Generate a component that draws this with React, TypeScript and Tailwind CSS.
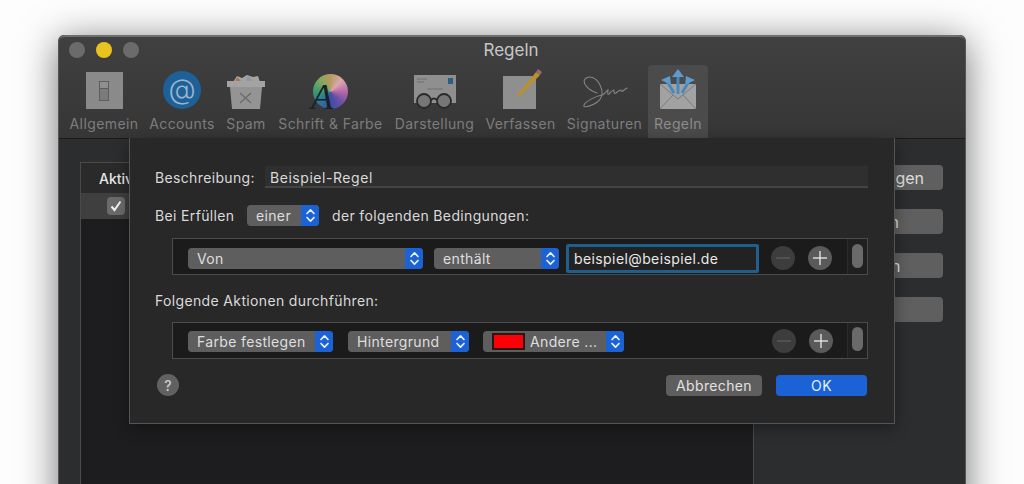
import type { ReactNode } from "react";

const font = { fontFamily: "Inter, 'Liberation Sans', sans-serif" };

function Chevrons() {
    return (
        <svg className="w-[9px] h-[15px]" viewBox="0 0 9 15" fill="none" stroke="#e8eefc" strokeWidth={1.7} strokeLinecap="round" strokeLinejoin="round">
            <path d="M1 5.5 L4.5 1.8 L8 5.5" />
            <path d="M1 9.5 L4.5 13.2 L8 9.5" />
        </svg>
    );
}

function Popup({ label, className, swatch }: { label: string; className: string; swatch?: boolean }) {
    return (
        <div className={`h-[21px] flex rounded-[4px] overflow-hidden bg-[#5e5e5e] shrink-0 ${className}`}>
            <div className="flex-1 flex items-center pl-[9px] text-[14px] text-[#dedede] tracking-[0.35px] whitespace-nowrap">
                {swatch && <span className="w-[33px] h-[17px] bg-[#fb0007] border-2 border-[#2b1414] mr-[5px] shrink-0" />}
                {label}
            </div>
            <div className="w-[18px] bg-[#1a62d6] flex items-center justify-center shrink-0">
                <Chevrons />
            </div>
        </div>
    );
}

function RoundButton({ minus }: { minus?: boolean }) {
    return (
        <div className={`w-[24px] h-[24px] rounded-full flex items-center justify-center shrink-0 ${minus ? "bg-[#3d3d3d]" : "bg-[#5a5a5a]"}`}>
            <svg className="w-[16px] h-[16px]" viewBox="0 0 16 16" stroke={minus ? "#5e5e5e" : "#ececec"} strokeWidth={1.3}>
                <path d="M1 8 H15" />
                {!minus && <path d="M8 1 V15" />}
            </svg>
        </div>
    );
}

function RuleBox({ children, rowClass, thumbClass, circlesClass }: { children: ReactNode; rowClass: string; thumbClass: string; circlesClass: string }) {
    return (
        <div className="ml-[17px] mr-[1px] h-[37px] flex items-stretch border border-[#4b4b4b] bg-[#1b1b1b]">
            <div className={`flex-1 flex items-center pl-[15px] min-w-0 ${rowClass}`}>
                {children}
                <div className={`ml-auto flex gap-[13px] ${circlesClass}`}>
                    <RoundButton minus />
                    <RoundButton />
                </div>
            </div>
            <div className="w-[20px] border-l border-[#2c2c2c] bg-[#202020] flex justify-center shrink-0">
                <div className={`w-[11px] h-[24px] rounded-full bg-[#6a6a6a] ${thumbClass}`} />
            </div>
        </div>
    );
}

function GeneralIcon() {
    return (
        <div className="w-[37px] h-[37px] bg-[#8a8a8a] flex items-center justify-center">
            <div className="w-[10px] h-[20px] border border-[#5d5d5d] bg-[#7b7b7b]">
                <div className="h-[7px] border-b border-[#5d5d5d] bg-[#8f8f8f]" />
            </div>
        </div>
    );
}

function AccountsIcon() {
    return (
        <div className="w-[38px] h-[38px] rounded-full bg-[#1e6098] flex items-center justify-center text-[28px] font-light leading-none text-[#9ab6cd] pb-[3px]">
            @
        </div>
    );
}

function SpamIcon() {
    return (
        <svg className="w-[38px] h-[34px]" viewBox="0 0 38 34">
            <path d="M6 7 L10 1 L15 3 L20 0 L26 2 L31 1 L33 7 Z" fill="#a9a39b" />
            <path d="M10 2 L15 7 H8 Z" fill="#a8794f" />
            <path d="M21 1 L27 7 H18 Z" fill="#8d97ad" />
            <path d="M0 6 H38 V12 H0 Z" fill="#a3a3a3" />
            <path d="M3 12 H35 L33 34 H5 Z" fill="#949494" />
            <path d="M13 18 L24 28 M24 18 L13 28" stroke="#6a6a6a" strokeWidth={1.3} />
        </svg>
    );
}

function FontIcon() {
    return (
        <div className="relative w-[35px] h-[35px] rounded-full bg-[conic-gradient(#b89a60,#d8a8b0,#b868a8,#6a50a8,#3a50a0,#2a78a0,#3a9a70,#80a860,#b89a60)]">
            <span className="absolute left-[-2px] top-[9px] text-[36px] leading-[28px] text-[#1c2028] italic" style={{ fontFamily: "'Liberation Serif', serif" }}>
                A
            </span>
        </div>
    );
}

function LookIcon() {
    return (
        <svg className="w-[44px] h-[34px]" viewBox="0 0 44 34">
            <rect x="1" y="0" width="42" height="28" fill="#8f8f8f" />
            <rect x="35" y="3" width="5" height="6" fill="#2c5f86" />
            <path d="M4 4 H14 M4 7 H11 M14 14 H30" stroke="#6f6f6f" strokeWidth={1} />
            <circle cx="11" cy="26" r="7" fill="#777" stroke="#2a2a2a" strokeWidth={1.8} />
            <circle cx="31" cy="26" r="7" fill="#777" stroke="#2a2a2a" strokeWidth={1.8} />
            <path d="M18 25 Q21 22 24 25" stroke="#2a2a2a" strokeWidth={1.8} fill="none" />
        </svg>
    );
}

function ComposeIcon() {
    return (
        <svg className="w-[44px] h-[42px]" viewBox="0 0 44 42">
            <rect x="4" y="9" width="33" height="33" fill="#8f8f8f" />
            <path d="M19 27 L37 5 L41 8 L21 29 L17 30 Z" fill="#b8902f" />
            <path d="M37 5 L39 2 L43 5 L41 8 Z" fill="#9a6a72" />
        </svg>
    );
}

function SignatureIcon() {
    return (
        <svg className="w-[46px] h-[33px]" viewBox="0 0 46 33" fill="none" stroke="#858585" strokeWidth={1.1} strokeLinecap="round">
            <path d="M15 17 C6 14 0 7 3 3 C7 -1 14 1 18 9 C22 17 20 24 12 28 C6 31 1 32 2 29 C4 25 14 20 20 19 C23 18 24 15 26 14 C26 17 25 19 27 18 C29 16 30 14 32 14 C32 17 32 18 34 17 C36 15 37 14 39 14 C39 16 40 16 42 14 L45 12" />
        </svg>
    );
}

function RulesIcon() {
    return (
        <svg className="w-[38px] h-[40px]" viewBox="0 0 38 40">
            <path d="M1 15 H37 V40 H1 Z" fill="#a2a2a2" />
            <path d="M1 15 L19 30 L37 15 M1 40 L14 26 M37 40 L24 26" stroke="#7a7a7a" strokeWidth={1} fill="none" />
            <path d="M19 25 V7 M15 24 L8 12 M23 24 L30 12" stroke="#4a88bc" strokeWidth={3} fill="none" />
            <path d="M13 8 L19 0 L25 8 Z M2 11 L11 7 L12 16 Z M36 11 L27 7 L26 16 Z" fill="#5b9bd0" />
        </svg>
    );
}

const tabs = [
    { label: "Allgemein", width: "w-[80px]", icon: <GeneralIcon /> },
    { label: "Accounts", width: "w-[76px]", icon: <AccountsIcon /> },
    { label: "Spam", width: "w-[52px]", icon: <SpamIcon /> },
    { label: "Schrift & Farbe", width: "w-[117px]", icon: <FontIcon /> },
    { label: "Darstellung", width: "w-[91px]", icon: <LookIcon /> },
    { label: "Verfassen", width: "w-[81px]", icon: <ComposeIcon /> },
    { label: "Signaturen", width: "w-[87px]", icon: <SignatureIcon /> },
    { label: "Regeln", width: "w-[60px]", icon: <RulesIcon />, active: true },
];

const sideButtons = ["Regel hinzufügen", "Bearbeiten", "Duplizieren", "Entfernen"];

export default function App() {
    return (
        <div className="w-[1024px] h-[484px] overflow-hidden bg-[#fdfdfd] pt-[35px] pl-[58px]" style={font}>
            <div className="relative w-[908px] h-[520px] rounded-t-[6px] shadow-[0_6px_38px_rgba(0,0,0,0.55)] border-x border-[#555] bg-[#2c2d2f]">
                {/* Toolbar */}
                <div className="h-[104px] rounded-t-[6px] border-t-2 border-[#6e6e6e] border-b border-b-[#1a1a1a] bg-gradient-to-b from-[#404040] to-[#363636]">
                    <div className="relative h-[28px] flex items-center justify-center text-[17px] pr-[2px] text-[#c6c6c6]">
                        <div className="absolute left-[10px] top-[5px] flex gap-[11px]">
                            <span className="w-[16px] h-[16px] rounded-full bg-[#6b6b6b]" />
                            <span className="w-[16px] h-[16px] rounded-full bg-[#e9c41f]" />
                            <span className="w-[16px] h-[16px] rounded-full bg-[#6b6b6b]" />
                        </div>
                        Regeln
                    </div>
                    <div className="flex pl-[5px]">
                        {tabs.map((tab) => (
                            <div key={tab.label} className={`${tab.width} h-[73px] flex flex-col items-center rounded-t-[4px] ${tab.active ? "bg-[#4b4b4b]" : ""}`}>
                                <div className="h-[46px] pb-[2px] flex items-end justify-center">{tab.icon}</div>
                                <div className={`mt-[3px] text-[14px] leading-[20px] tracking-[0.4px] whitespace-nowrap ${tab.active ? "text-[#8c8c8c]" : "text-[#7d7d7d]"}`}>{tab.label}</div>
                            </div>
                        ))}
                    </div>
                </div>

                {/* Rules list behind the sheet */}
                <div className="flex pl-[21px] pt-[23px]">
                    <div className="w-[674px] h-[400px] border border-[#4a4a4a] bg-[#1d1d1f]">
                        <div className="h-[30px] bg-[#2a2a2b] flex items-center pl-[18px] text-[14px] font-medium text-[#e6e6e6]">Aktiv</div>
                        <div className="h-[26px] bg-[#3f3f3f] flex items-center pl-[26px]">
                            <div className="w-[18px] h-[18px] rounded-[4px] bg-[#6a6a6a] flex items-center justify-center">
                                <svg className="w-[12px] h-[12px]" viewBox="0 0 12 12" fill="none" stroke="#f0f0f0" strokeWidth={2}>
                                    <path d="M1.5 6.5 L4.5 10 L10.5 1.5" />
                                </svg>
                            </div>
                        </div>
                    </div>
                    <div className="ml-[33px] w-[156px] flex flex-col gap-[19px] pt-[3px]">
                        {sideButtons.map((b) => (
                            <div key={b} className="h-[25px] pr-[14px] rounded-[4px] bg-[#5f5f5f] flex items-center justify-center text-[16px] text-[#dcdcdc] whitespace-nowrap">
                                {b}
                            </div>
                        ))}
                    </div>
                </div>

                {/* Rule sheet */}
                <div className="absolute left-[70px] top-[103px] w-[766px] h-[286px] bg-[#282828] border border-t-0 border-[#555] pl-[25px] pr-[25px] text-[14px] text-[#dadada] tracking-[0.35px] shadow-[0_4px_14px_rgba(0,0,0,0.35)]">
                    <div className="flex items-center h-[22px] mt-[28px]">
                        <span className="w-[110px]">Beschreibung:</span>
                        <div className="flex-1 h-[22px] mr-[1px] bg-[#2f2f2f] border-b-2 border-[#444] pl-[5px] leading-[24px] tracking-[0.55px]">Beispiel-Regel</div>
                    </div>
                    <div className="flex items-center h-[22px] mt-[16px]">
                        <span className="w-[92px]">Bei Erfüllen</span>
                        <Popup label="einer" className="w-[72px]" />
                        <span className="ml-[13px]">der folgenden Bedingungen:</span>
                    </div>
                    <div className="mt-[12px]">
                        <RuleBox rowClass="pt-[3px]" thumbClass="mt-[5px]" circlesClass="mr-[15px]">
                            <Popup label="Von" className="w-[235px]" />
                            <Popup label="enthält" className="w-[125px] ml-[11px]" />
                            <div className="w-[193px] h-[29px] ml-[7px] border-[3px] border-[#1e5f8e] rounded-[2px] bg-[#222] flex items-center pl-[5px] text-[14px] text-[#e8e8e8] tracking-[0.4px] shrink-0">
                                beispiel@beispiel.de
                            </div>
                        </RuleBox>
                    </div>
                    <div className="h-[20px] mt-[16px] leading-[20px]">Folgende Aktionen durchführen:</div>
                    <div className="mt-[11px]">
                        <RuleBox rowClass="pt-[1px]" thumbClass="mt-[4px]" circlesClass="mr-[14px]">
                            <Popup label="Farbe festlegen" className="w-[145px]" />
                            <Popup label="Hintergrund" className="w-[121px] ml-[15px]" />
                            <Popup label="Andere ..." className="w-[141px] ml-[14px]" swatch />
                        </RuleBox>
                    </div>
                    <div className="flex items-center justify-between mt-[15px] mr-[2px]">
                        <div className="w-[22px] h-[22px] rounded-full bg-[#616161] flex items-center justify-center text-[14px] font-medium text-[#d0d0d0] ml-[2px]">?</div>
                        <div className="flex gap-[14px]">
                            <div className="w-[96px] h-[21px] rounded-[4px] bg-[#5e5e5e] flex items-center justify-center text-[#e2e2e2]">Abbrechen</div>
                            <div className="w-[91px] h-[21px] rounded-[4px] bg-[#1a62d6] flex items-center justify-center text-[#e8eefc]">OK</div>
                        </div>
                    </div>
                </div>
            </div>
        </div>
    );
}
